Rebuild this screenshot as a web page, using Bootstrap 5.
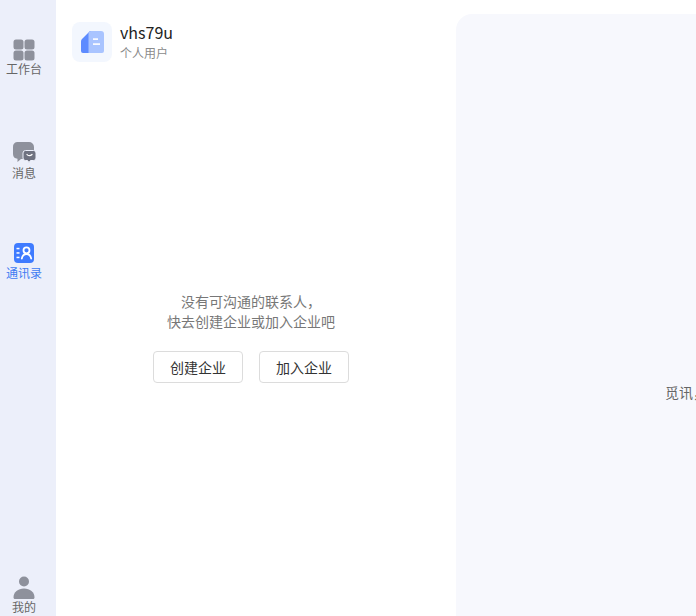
<!DOCTYPE html>
<html lang="zh-CN">

<head>
  <meta charset="UTF-8" />
  <meta name="viewport" content="width=device-width, initial-scale=1.0" />
  <title>通讯录</title>
  <link href="https://cdn.jsdelivr.net/npm/bootstrap@5.3.3/dist/css/bootstrap.min.css" rel="stylesheet" />
  <style>
    html, body { height: 616px; overflow: hidden; }
    body { font-family: "Liberation Sans", "Noto Sans CJK SC", sans-serif; background: #fff; color: #222; }
    .app-shell { height: 616px; }
    .side-rail { width: 56px; background: #ecEFfa; padding: 39px 8px 0 0; }
    .rail-item { width: 48px; height: 40px; color: #666; font-size: 12px; line-height: 16px; text-decoration: none; }
    .rail-item svg { display: block; flex: none; margin-bottom: 1px; }
    .rail-item.is-active { color: #3e7bf2; }
    .rail-msg { margin-top: 63px; }
    .rail-msg svg, .rail-book svg { margin-bottom: 2px; }
    .rail-book { margin-top: 60px; }
    .rail-me { margin-top: auto; }
    .contact-pane { width: 400px; padding-right: 10px; }
    .profile-row { padding: 22px 16px 0; }
    .avatar-box { width: 40px; height: 40px; border-radius: 8px; background: #f3f7fe; }
    .profile-name { font-family: "Noto Sans CJK SC", sans-serif; font-size: 16px; line-height: 20px; color: #222; }
    .profile-sub { font-size: 12px; line-height: 16px; color: #8a8a8a; margin-top: 4px; }
    .empty-box { margin-top: 230px; }
    .empty-text { font-size: 14px; line-height: 20px; color: #777; }
    .action-row { margin-top: 19px; }
    .btn-outline-plain { width: 90px; height: 32px; padding: 2px 0 0; font-size: 14px; line-height: 28px; color: #333; background: #fff; border: 1px solid #dcdcdc; border-radius: 4px; }
    .detail-pane { margin-top: 14px; height: 602px; flex: 1 0 0; background: #f7f8fd; border-top-left-radius: 16px; padding-left: 209px; padding-top: 156px; font-size: 14px; color: #666; white-space: nowrap; overflow: hidden; }
  </style>
</head>

<body>
  <div class="app-shell d-flex">
    <nav class="side-rail d-flex flex-column align-items-center flex-shrink-0">
      <a class="rail-item d-flex flex-column align-items-center" href="#">
        <svg width="22" height="22" viewBox="0 0 22 22" fill="#8e919c">
          <rect x="0.5" y="0.5" width="10" height="10" rx="2.5" />
          <rect x="11.5" y="0.5" width="10" height="10" rx="2.5" />
          <rect x="0.5" y="11.5" width="10" height="10" rx="2.5" />
          <rect x="11.5" y="11.5" width="10" height="10" rx="2.5" />
        </svg>
        <span>工作台</span>
      </a>
      <a class="rail-item rail-msg d-flex flex-column align-items-center" href="#">
        <svg width="24" height="22" viewBox="0 0 24 22">
          <path fill="#8e919c" d="M5 0h12a5 5 0 0 1 5 5v7a5 5 0 0 1-5 5H9l-3.500 3v-3.200A5 5 0 0 1 1 12V5a5 5 0 0 1 4-5z" />
          <path fill="#6f7280" stroke="#ecEFfa" stroke-width="1" d="M13.500 8.500h8a2.500 2.500 0 0 1 2.500 2.500v5a2.500 2.500 0 0 1-2.500 2.500h-3L17 20.500l-1.500-2h-2a2.500 2.500 0 0 1-2.500-2.500v-5a2.500 2.500 0 0 1 2.500-2.500z" />
          <path fill="none" stroke="#fff" stroke-width="1.300" stroke-linecap="round" d="M15 12.500c1 1.500 3.500 1.500 5 0" />
        </svg>
        <span>消息</span>
      </a>
      <a class="rail-item rail-book is-active d-flex flex-column align-items-center" href="#">
        <svg width="22" height="22" viewBox="0 0 22 22">
          <rect x="1" y="1" width="20" height="20" rx="4" fill="#3f7bff" />
          <rect x="3.500" y="5.800" width="3" height="1.500" fill="#fff" />
          <rect x="3.500" y="10.200" width="3" height="1.500" fill="#fff" />
          <rect x="3.500" y="14.700" width="3" height="1.500" fill="#fff" />
          <circle cx="13.500" cy="8.300" r="3" fill="none" stroke="#fff" stroke-width="1.800" />
          <path fill="none" stroke="#fff" stroke-width="1.800" stroke-linecap="round" d="M8.800 16.500c.6-3 2.500-4.500 4.700-4.500s4.100 1.500 4.700 4.500" />
        </svg>
        <span>通讯录</span>
      </a>
      <a class="rail-item rail-me d-flex flex-column align-items-center" href="#">
        <svg width="22" height="23" viewBox="0 0 22 23" fill="#8e919c">
          <circle cx="11" cy="5.500" r="5" />
          <path d="M2 23c-1 0-1.500-.6-1.500-1.500C.5 16 5 12.500 11 12.500s10.500 3.500 10.500 9c0 .9-.5 1.500-1.500 1.500z" />
        </svg>
        <span>我的</span>
      </a>
    </nav>

    <section class="contact-pane flex-shrink-0">
      <div class="profile-row d-flex gap-2 align-items-center">
        <div class="avatar-box d-flex align-items-center justify-content-center">
          <svg width="24" height="24" viewBox="0 0 24 24">
            <path fill="#5d8bff" d="M10 1 3 8C1.500 9.300 1 10 1 12v9a2 2 0 0 0 2 2h8V1z" />
            <path fill="#a9c4ff" d="M8.500 3.500A2.500 2.500 0 0 1 11 1h10a3 3 0 0 1 3 3v17a2 2 0 0 1-2 2H8.500z" />
            <rect x="13" y="8.300" width="5" height="1.600" fill="#fff" />
            <rect x="13" y="13.300" width="7" height="1.600" fill="#fff" />
          </svg>
        </div>
        <div>
          <div class="profile-name">vhs79u</div>
          <div class="profile-sub">个人用户</div>
        </div>
      </div>
      <div class="empty-box text-center">
        <p class="empty-text mb-0">没有可沟通的联系人，<br />快去创建企业或加入企业吧</p>
        <div class="action-row d-flex justify-content-center gap-3">
          <button class="btn btn-outline-plain" type="button">创建企业</button>
          <button class="btn btn-outline-plain" type="button">加入企业</button>
        </div>
      </div>
    </section>

    <section class="detail-pane d-flex align-items-center">觅讯，让沟通更简单</section>
  </div>
  <script src="https://cdn.jsdelivr.net/npm/bootstrap@5.3.3/dist/js/bootstrap.bundle.min.js"></script>
</body>

</html>
